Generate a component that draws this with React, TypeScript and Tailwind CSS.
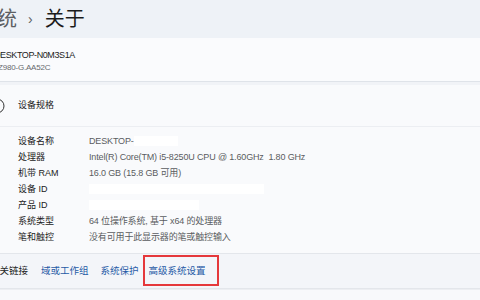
const font = "font-['Segoe_UI','Liberation_Sans','Noto_Sans_CJK_SC',sans-serif]";

const specs: { label: string; value: string; mask?: string }[] = [
  { label: "设备名称", value: "DESKTOP-", mask: "w-[44px]" },
  { label: "处理器", value: "Intel(R) Core(TM) i5-8250U CPU @ 1.60GHz  1.80 GHz" },
  { label: "机带 RAM", value: "16.0 GB (15.8 GB 可用)" },
  { label: "设备 ID", value: "", mask: "w-[175px]" },
  { label: "产品 ID", value: "", mask: "w-[110px]" },
  { label: "系统类型", value: "64 位操作系统, 基于 x64 的处理器" },
  { label: "笔和触控", value: "没有可用于此显示器的笔或触控输入" },
];

export default function App() {
  return (
    <div className={`${font} w-[480px] h-[300px] overflow-hidden bg-[#eef2f7] text-[#1b1b1b] flex flex-col`}>
      {/* Breadcrumb header */}
      <div className="h-[38px] flex items-center -ml-[3px] text-[20px] shrink-0">
        <span className="text-[#5d5f63]">统</span>
        <span className="ml-[11px] mr-[12px] text-[14px] text-[#5d5f63]">›</span>
        <span>关于</span>
      </div>

      {/* Device name card */}
      <div className="h-[44px] shrink-0 bg-[#fafbfd] border-b border-[#dfe3e9] flex flex-col justify-center pt-[2px]">
        <div className="text-[9px] leading-[13px] tracking-[-0.4px] -ml-[6px]">DESKTOP-N0M3S1A</div>
        <div className="text-[8px] leading-[11px] tracking-[-0.2px] text-[#66696d] -ml-[2px]">Z980-G.AA52C</div>
      </div>

      <div className="h-[3px] shrink-0 bg-[#f1f3f7]" />

      {/* Specs card */}
      <div className="shrink-0 bg-[#f9fafc]">
        <div className="h-[42px] flex items-center border-b border-[#eceef2]">
          <svg width="16" height="16" viewBox="0 0 16 16" className="-ml-[11px] mr-[13px]">
            <circle cx="8" cy="8" r="7" fill="none" stroke="#333" strokeWidth="1" />
          </svg>
          <span className="text-[9px]">设备规格</span>
        </div>
        <div className="pt-[6px] pb-[8px] pl-[18px] text-[9px] leading-[16px]">
          {specs.map((s) => (
            <div key={s.label} className="flex h-[16px] items-center">
              <span className="w-[71px] shrink-0 text-[#222]">{s.label}</span>
              <span className="text-[#5a5c60] whitespace-pre tracking-[-0.15px]">{s.value}</span>
              {s.mask && <span className={`${s.mask} h-[10px] bg-white`} />}
            </div>
          ))}
        </div>
      </div>

      {/* Related links */}
      <div className="h-[36px] shrink-0 bg-[#f3f5f9] border-y border-[#e3e6eb] flex items-center text-[9.5px]">
        <span className="-ml-[10px] text-[#1f1f1f]">相关链接</span>
        <span className="ml-[13px] text-[#1f5aa6]">域或工作组</span>
        <span className="ml-[12px] text-[#1f5aa6]">系统保护</span>
        <span className="relative ml-[10px] text-[#1f5aa6]">
          高级系统设置
          <span className="absolute -left-[6px] -right-[13px] -top-[9px] -bottom-[8px] border-2 border-[#e5383b]" />
        </span>
      </div>

      <div className="flex-1 bg-[#f8f9fb] border-t border-[#eceef2]" />
    </div>
  );
}
